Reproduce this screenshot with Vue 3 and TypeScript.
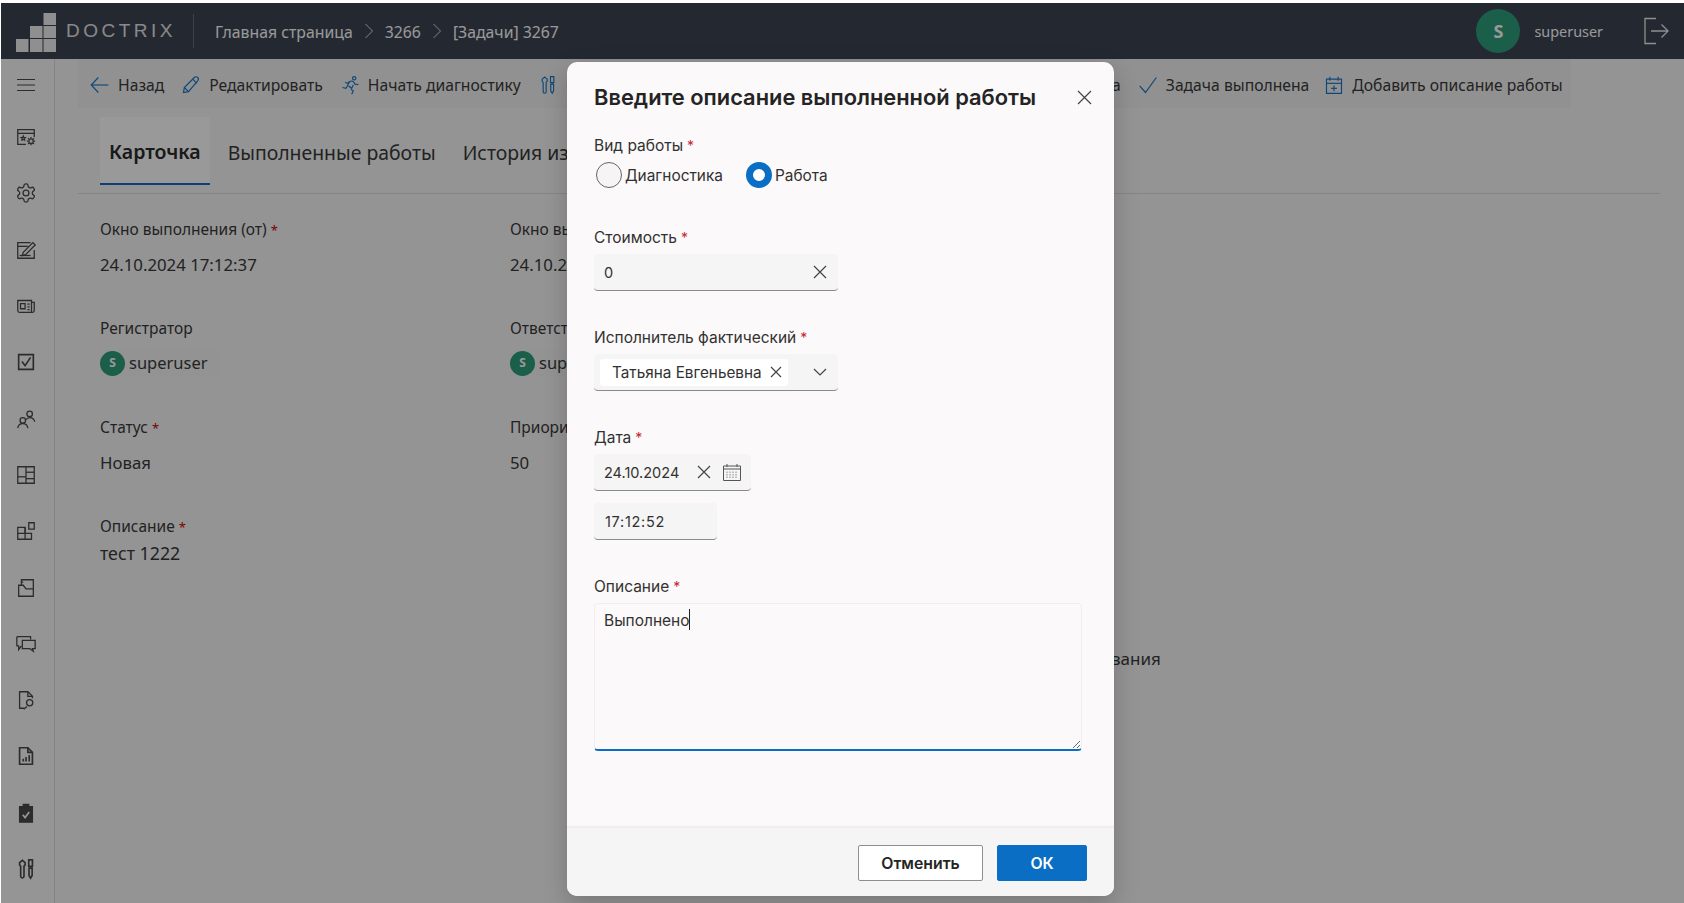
<script setup lang="ts">
import { onMounted, ref } from 'vue'

type Icon = { paths: string[]; circles?: number[][]; solid?: boolean }

const tools: Icon = {
  paths: [
    'M5 5l3-2.500L11 5v2.500L9.800 9v11a1.800 1.800 0 0 1-3.600 0V9L5 7.500z',
    'M15 2h4v7h-4z',
    'M17 9v2',
    'M15.300 11h3.400v8L17 22l-1.700-3z',
  ],
  solid: true,
}

const menu: Icon[] = [
  { paths: ['M12 20H3V4h18v8', 'M3 8h18', 'M9 11l.7 1.500 1.600.2-1.200 1.100.3 1.600-1.400-.8-1.400.8.3-1.600-1.200-1.100 1.600-.2z', 'M17.500 12v1.300M17.500 19.700V21M13 16.500h1.300M20.700 16.500H22M14.300 13.300l.9.9M19.800 18.800l.9.9M14.300 19.700l.9-.9M19.800 14.200l.9-.9'], circles: [[17.5, 16.5, 2.4]] },
  {
    paths: ['M12.220 2h-.44a2 2 0 0 0-2 2v.18a2 2 0 0 1-1 1.730l-.43.25a2 2 0 0 1-2 0l-.15-.08a2 2 0 0 0-2.730.73l-.22.38a2 2 0 0 0 .73 2.730l.15.1a2 2 0 0 1 1 1.720v.51a2 2 0 0 1-1 1.740l-.15.09a2 2 0 0 0-.73 2.730l.22.38a2 2 0 0 0 2.730.73l.15-.08a2 2 0 0 1 2 0l.43.25a2 2 0 0 1 1 1.730V20a2 2 0 0 0 2 2h.44a2 2 0 0 0 2-2v-.18a2 2 0 0 1 1-1.730l.43-.25a2 2 0 0 1 2 0l.15.08a2 2 0 0 0 2.730-.73l.22-.39a2 2 0 0 0-.73-2.730l-.15-.08a2 2 0 0 1-1-1.740v-.5a2 2 0 0 1 1-1.740l.15-.09a2 2 0 0 0 .73-2.730l-.22-.38a2 2 0 0 0-2.730-.73l-.15.08a2 2 0 0 1-2 0l-.43-.25a2 2 0 0 1-1-1.730V4a2 2 0 0 0-2-2z'],
    circles: [[12, 12, 3.2]],
  },
  { paths: ['M21 12v9H3V4h14', 'M3 8h11', 'M8 18l1-3.500L19.500 4l2.500 2.500L11.500 17z', 'M5 18h12'] },
  { paths: ['M3 6h15v13H5a2 2 0 0 1-2-2z', 'M18 8h3v9a2 2 0 0 1-2 2h-1', 'M6 9.500h5v5.500H6z', 'M13.500 10h2.500M13.500 13h2.500M13.500 16h2.500'] },
  { paths: ['M4 4h16v16H4z', 'M7.500 11.500l3.500 4.500 6-9'], solid: true },
  { paths: ['M3 22c.4-3.400 2.600-5 5.500-5s5.100 1.600 5.500 5', 'M12 12.800c1-1.600 2.400-2.400 4-2.400 3 0 5 1.700 5.500 4.600'], circles: [[8.5, 13.5, 3], [16, 6.5, 3]] },
  { paths: ['M3 3h18v18H3z', 'M12 3v18', 'M3 14h9', 'M12 9h9', 'M12 16h9'] },
  { paths: ['M3 8h8v13H3z', 'M3 14.500h15V21H11', 'M11 14.500V8', 'M15 3h6v7h-6z'] },
  { paths: ['M4 21V9h5l3 4h8v8z', 'M7 9V5.500h2', 'M7 5.500V3h13v10'] },
  { paths: ['M2 4h15v3', 'M2 4v10h2v4l3-4', 'M8 8h14v9h-3l1 3-4-3H8z'] },
  { paths: ['M10 21H5V3h9l5 5v2', 'M14 3v5h5', 'M13 19l-3.500 3'], circles: [[16, 15, 3.4]] },
  { paths: ['M5 3h9l5 5v13H5z', 'M14 3v5h5', 'M9 18v-3', 'M12 18v-5', 'M15.500 18v-7'], solid: true },
  { paths: ['M5 5h14v17H5z', 'M9 5V2.500h6V5z'] },
  tools,
]

const back: Icon = { paths: ['M22 12H2', 'M10 3l-8.500 9 8.500 9'] }
const pencil: Icon = { paths: ['M3 21l1-6L16 3c1-1 3-1 4 0s1 3 0 4L9 20z', 'M14 5l5 5', 'M4 15l5 5'] }
const runner: Icon = {
  paths: ['M3 15l4 1 2-3', 'M9 13l2-5c2-1 4-1 5 0l2 3 4 .500', 'M12 8l-2 2-4-1', 'M13 17l3 2-2 4', 'M10 13l4 3 2-4'],
  circles: [[17, 4, 2]],
}
const check: Icon = { paths: ['M2 13l7 8L22 3'] }
const addDate: Icon = { paths: ['M3 5h18v17H3z', 'M3 10h18', 'M7 2v5', 'M17 2v5', 'M12 12.500v7', 'M8.500 16h7'] }

const actions: { label: string; icon: Icon; hidden?: string }[] = [
  { label: 'Назад', icon: back },
  { label: 'Редактировать', icon: pencil },
  { label: 'Начать диагностику', icon: runner },
  { label: 'Начать работу', icon: tools, hidden: 'item-start' },
  { label: 'Диагностика проведена', icon: check, hidden: 'item-diag' },
  { label: 'Задача выполнена', icon: check },
  { label: 'Добавить описание работы', icon: addDate },
]

const card = [
  [
    { label: 'Окно выполнения (от)', required: true, value: '24.10.2024 17:12:37' },
    { label: 'Окно выполнения (до)', required: true, value: '24.10.2024 17:12:37' },
  ],
  [
    { label: 'Регистратор', required: false, value: 'superuser', user: true },
    { label: 'Ответственный', required: false, value: 'superuser', user: true },
  ],
  [
    { label: 'Статус', required: true, value: 'Новая' },
    { label: 'Приоритет', required: true, value: '50' },
  ],
]

const kind = ref('work')
const cost = ref('0')
const date = ref('24.10.2024')
const time = ref('17:12:52')
const descr = ref('Выполнено')
const area = ref<HTMLTextAreaElement | null>(null)

onMounted(() => {
  area.value?.focus()
  area.value?.setSelectionRange(descr.value.length, descr.value.length)
})
</script>

<template>
  <div class="page">
    <header class="topbar">
      <svg class="logo" width="40" height="39" viewBox="0 0 40 39">
        <rect x="0" y="26" width="12.500" height="13" />
        <rect x="14" y="26" width="12.500" height="13" />
        <rect x="27.500" y="26" width="12.500" height="13" />
        <rect x="14" y="13" width="12.500" height="12" />
        <rect x="27.500" y="13" width="12.500" height="12" />
        <rect x="27.500" y="0" width="12.500" height="12" />
      </svg>
      <span class="brand">DOCTRIX</span>
      <span class="top-sep"></span>
      <nav class="crumbs">
        <span>Главная страница</span>
        <svg width="10" height="16" viewBox="0 0 10 16"><path d="M1.500 1l7 7-7 7" /></svg>
        <span>3266</span>
        <svg width="10" height="16" viewBox="0 0 10 16"><path d="M1.500 1l7 7-7 7" /></svg>
        <span>[Задачи] 3267</span>
      </nav>
      <span class="top-avatar">S</span>
      <span class="top-user">superuser</span>
      <svg class="logout" width="26" height="28" viewBox="0 0 26 28"><path d="M13 1.500H2v25h11M8 14h17M18.500 7.500L25 14l-6.500 6.500" /></svg>
    </header>

    <div class="layout">
      <aside class="sidebar">
        <div class="burger">
          <svg width="20" height="14" viewBox="0 0 20 14"><path d="M1 1.500h18M1 7h18M1 12.500h18" /></svg>
        </div>
        <div v-for="(item, i) in menu" :key="i" class="side-item">
          <svg width="22" height="22" viewBox="0 0 24 24" :class="{ solid: item.solid, filled: i === 12 }">
            <path v-for="d in item.paths" :key="d" :d="d" />
            <circle v-for="c in item.circles" :key="c.join()" :cx="c[0]" :cy="c[1]" :r="c[2]" />
            <path v-if="i === 12" class="tick" d="M8.500 14l2.500 3 4.500-6" />
          </svg>
        </div>
      </aside>

      <main class="content">
        <div class="toolbar">
          <button v-for="a in actions" :key="a.label" type="button" class="action" :class="a.hidden">
            <svg width="20" height="20" viewBox="0 0 24 24">
              <path v-for="d in a.icon.paths" :key="d" :d="d" />
              <circle v-for="c in a.icon.circles" :key="c.join()" :cx="c[0]" :cy="c[1]" :r="c[2]" />
            </svg>
            {{ a.label }}
          </button>
        </div>

        <div class="tabs">
          <span class="tab active">Карточка</span>
          <span class="tab">Выполненные работы</span>
          <span class="tab">История изменений</span>
        </div>

        <section class="card">
          <div v-for="(row, r) in card" :key="r" class="card-row">
            <div v-for="f in row" :key="f.label" class="info">
              <div class="info-label">{{ f.label }}<i v-if="f.required">*</i></div>
              <div v-if="f.user" class="info-user"><span class="mini-avatar">S</span>{{ f.value }}</div>
              <div v-else class="info-value">{{ f.value }}</div>
            </div>
          </div>
          <div class="info tight">
            <div class="info-label">Описание<i>*</i></div>
            <div class="info-value">тест 1222</div>
          </div>
          <div class="note">Нет данных для планирования</div>
        </section>
      </main>
    </div>

    <div class="overlay">
      <div class="modal">
        <div class="modal-body">
          <div class="modal-head">
            <h2>Введите описание выполненной работы</h2>
            <svg class="x big" width="15" height="15" viewBox="0 0 15 15"><path d="M1 1l13 13M14 1L1 14" /></svg>
          </div>

          <div class="field">
            <div class="label">Вид работы<i>*</i></div>
            <div class="radios">
              <label class="radio" @click="kind = 'diag'"><span class="dot" :class="{ on: kind === 'diag' }"></span>Диагностика</label>
              <label class="radio second" @click="kind = 'work'"><span class="dot" :class="{ on: kind === 'work' }"></span>Работа</label>
            </div>
          </div>

          <div class="field">
            <div class="label">Стоимость<i>*</i></div>
            <div class="input w-wide">
              <input v-model="cost" type="text" />
              <svg class="x" width="14" height="14" viewBox="0 0 14 14"><path d="M1 1l12 12M13 1L1 13" /></svg>
            </div>
          </div>

          <div class="field">
            <div class="label">Исполнитель фактический<i>*</i></div>
            <div class="input w-wide select">
              <span class="chip">Татьяна Евгеньевна
                <svg class="x" width="12" height="12" viewBox="0 0 12 12"><path d="M1 1l10 10M11 1L1 11" /></svg>
              </span>
              <svg class="chev" width="14" height="8" viewBox="0 0 14 8"><path d="M1 1l6 6 6-6" /></svg>
            </div>
          </div>

          <div class="field">
            <div class="label">Дата<i>*</i></div>
            <div class="input w-date">
              <input v-model="date" type="text" />
              <svg class="x" width="14" height="14" viewBox="0 0 14 14"><path d="M1 1l12 12M13 1L1 13" /></svg>
              <svg class="cal" width="18" height="18" viewBox="0 0 18 18">
                <path d="M.5 3h17v14.500H.5zM.5 6h17M4 1v3M14 1v3" />
                <path class="cal-days" d="M4 8.500v7M7 8.500v7M10 8.500v7M13 8.500v7" />
              </svg>
            </div>
            <div class="input w-time"><input v-model="time" type="text" /></div>
          </div>

          <div class="field">
            <div class="label">Описание<i>*</i></div>
            <div class="area-wrap">
              <textarea ref="area" v-model="descr" class="area"></textarea>
              <span class="caret"></span>
            </div>
          </div>
        </div>

        <footer class="modal-foot">
          <button type="button" class="btn">Отменить</button>
          <button type="button" class="btn primary">ОК</button>
        </footer>
      </div>
    </div>
  </div>
</template>

<style>
html, body { margin: 0; background: #fff; }
</style>

<style scoped>
.page { position: relative; height: 900px; margin: 3px 0 0 1px; background: #f7f7f7; overflow: hidden; font-family: "Noto Sans", sans-serif; color: #3a3a3a; }

.topbar { display: flex; align-items: center; height: 56px; padding: 0 15px 0 15px; background: #3c4353; color: #fff; box-sizing: border-box; }
.logo { fill: #eee; margin-top: 2px; }
.brand { margin-left: 10px; font-family: "Liberation Sans", sans-serif; font-size: 19px; letter-spacing: 3.500px; color: #e4e4e4; }
.top-sep { width: 1px; height: 34px; margin-left: 17px; background: #666d7d; }
.crumbs { display: flex; align-items: center; gap: 11px; margin: 2px 0 0 21px; font-size: 15.800px; }
.crumbs svg { fill: none; stroke: #ddd; stroke-width: 1; margin-top: -2px; }
.top-avatar { display: flex; align-items: center; justify-content: center; width: 44px; height: 44px; margin-left: auto; border-radius: 50%; background: #2d9d7b; font-size: 18px; font-weight: 700; }
.top-user { margin-left: 14px; font-size: 14.400px; }
.logout { margin-left: 40px; fill: none; stroke: #eee; stroke-width: 1.300; }

.layout { display: flex; height: 844px; }
.sidebar { flex: none; width: 49px; padding-right: 4px; border-right: 1px solid #dcdcdc; background: #f8f8f8; color: #4a4a4a; }
.burger { display: flex; align-items: center; justify-content: center; box-sizing: border-box; height: 50px; padding-top: 2px; }
.burger svg { fill: none; stroke: currentColor; stroke-width: 1.200; }
.side-item { display: flex; align-items: center; justify-content: center; height: 56.300px; }
.side-item svg { fill: none; stroke: currentColor; stroke-width: 1.400; }
.side-item svg.solid { stroke-width: 1.800; }
.side-item svg.filled { fill: currentColor; }
.side-item .tick { fill: none; stroke: #fff; stroke-width: 1.800; }

.content { flex: 1; min-width: 0; }
.toolbar { display: flex; align-items: center; width: fit-content; height: 49px; margin-left: 23px; padding: 2px 8px 0 12px; box-sizing: border-box; background: #f2f2f2; }
.action { display: flex; align-items: center; flex: none; gap: 8px; margin-right: 17px; padding: 0; border: none; background: none; font: inherit; font-size: 15.700px; color: #3a3a3a; white-space: nowrap; }
.action:last-child { margin: 0 0 0 -2px; }
.action svg { flex: none; fill: none; stroke: #1a78c8; stroke-width: 1.400; }
.item-start { width: 230px; }
.item-diag { justify-content: flex-end; width: 336px; }

.tabs { display: flex; gap: 9px; height: 76px; margin: 9px 24px 0 23px; padding: 0 22px; border-bottom: 1px solid #dedede; }
.tab { display: flex; align-items: center; box-sizing: border-box; height: 68px; padding: 3px 9px 0; font-size: 19.400px; white-space: nowrap; }
.tab.active { border-bottom: 2px solid #1a6cc4; background: #fff; font-weight: 600; font-size: 19.500px; color: #2a2a2a; }

.card { padding: 24px 0 0 45px; }
.card-row { display: flex; height: 99px; }
.info { width: 410px; }
.info-label { height: 22px; font-size: 15.500px; line-height: 22px; }
.info-label i { margin-left: 4px; font-style: normal; font-size: 13px; color: #c00; }
.info-value { margin-top: 12px; font-size: 16.800px; line-height: 26px; }
.tight .info-value { margin-top: 3px; font-size: 17.800px; }
.info-user { display: flex; align-items: center; gap: 4px; width: fit-content; margin-top: 11px; padding-right: 10px; font-size: 16.500px; line-height: 26px; background: #f5f5f5; }
.mini-avatar { display: flex; align-items: center; justify-content: center; width: 25px; height: 25px; border-radius: 50%; background: #2d9d7b; color: #fff; font-size: 12px; font-weight: 700; }
.note { width: 250px; margin: 81px 0 0 804px; font-size: 17px; white-space: nowrap; }

.overlay { position: absolute; inset: 0; display: flex; justify-content: center; padding: 59px 4px 0 0; background: rgba(0, 0, 0, .4); }
.modal { display: flex; flex-direction: column; width: 547px; height: 834px; border-radius: 10px; background: #fbf9fa; box-shadow: 0 8px 24px rgba(0, 0, 0, .2); overflow: hidden; font-family: Inter, sans-serif; color: #323130; }
.modal-body { flex: 1; padding: 0 27px; }
.modal-head { display: flex; align-items: center; justify-content: space-between; height: 30px; margin: 20px 0 23px; }
.modal-head h2 { margin: 0; font-size: 21.850px; font-weight: 600; color: #242424; }
.x { flex: none; fill: none; stroke: #444; stroke-width: 1.200; }
.x.big { margin-right: -5px; }

.field { display: flow-root; margin-bottom: 36px; }
.label { height: 22px; margin-bottom: 5px; font-size: 15.500px; line-height: 22px; }
.label i { margin-left: 4px; font-style: normal; font-size: 14px; color: #c4262e; }

.radios { display: flex; height: 26px; margin: 1px 0 3px; }
.radio { display: flex; align-items: center; gap: 3px; margin-left: 2px; font-size: 15.400px; }
.radio.second { margin-left: 23px; }
.dot { width: 24px; height: 24px; border: 1px solid #666; border-radius: 50%; background: #f5f5f5; }
.dot.on { width: 12px; height: 12px; border: 7px solid #0a6fc4; background: #fff; }

.input { display: flex; align-items: center; gap: 12px; height: 37px; box-sizing: border-box; padding: 0 11px 0 10px; border-bottom: 1.500px solid #8a8a8a; border-radius: 4px; background: #f5f5f5; }
.input input { flex: 1; width: 0; min-width: 0; padding: 0; border: none; outline: none; background: none; font: inherit; font-size: 14.500px; color: #323130; }
.w-wide { width: 244px; }
.w-date { width: 157px; padding-right: 10px; }
.w-time { width: 123px; margin-top: 12px; padding-left: 11px; }
.w-time input { letter-spacing: .7px; }
.select { justify-content: space-between; padding-left: 6px; }
.chip { display: flex; align-items: center; gap: 8px; height: 27px; padding: 0 6px 0 12px; border-radius: 3px; background: #fff; font-size: 15.300px; white-space: nowrap; }
.chev { flex: none; fill: none; stroke: #444; stroke-width: 1.200; }
.cal { flex: none; fill: none; stroke: #555; stroke-width: 1; }
.cal-days { stroke-dasharray: 1.500 1; stroke: #888; }

.area-wrap { position: relative; width: 488px; }
.area { display: block; width: 488px; height: 148px; box-sizing: border-box; padding: 7px 9px; border: 1px solid #f0eeee; border-bottom: 2px solid #0a6fc4; border-radius: 4px; outline: none; background: #fbf9fa; font: inherit; font-size: 15.500px; color: #323130; caret-color: transparent; resize: both; }
.caret { position: absolute; top: 6px; left: 95px; width: 1px; height: 21px; background: #222; }

.modal-foot { display: flex; flex: none; justify-content: flex-end; gap: 14px; height: 70px; box-sizing: border-box; padding: 17px 27px 0; border-top: 2px solid #eee; background: #f5f5f5; }
.btn { width: 125px; height: 36px; border: 1px solid #8f8f8f; border-radius: 2px; background: #fff; font: inherit; font-size: 15.800px; font-weight: 600; color: #242424; }
.btn.primary { width: 90px; border-color: #0a6fc4; background: #0a6fc4; color: #fff; }
</style>
